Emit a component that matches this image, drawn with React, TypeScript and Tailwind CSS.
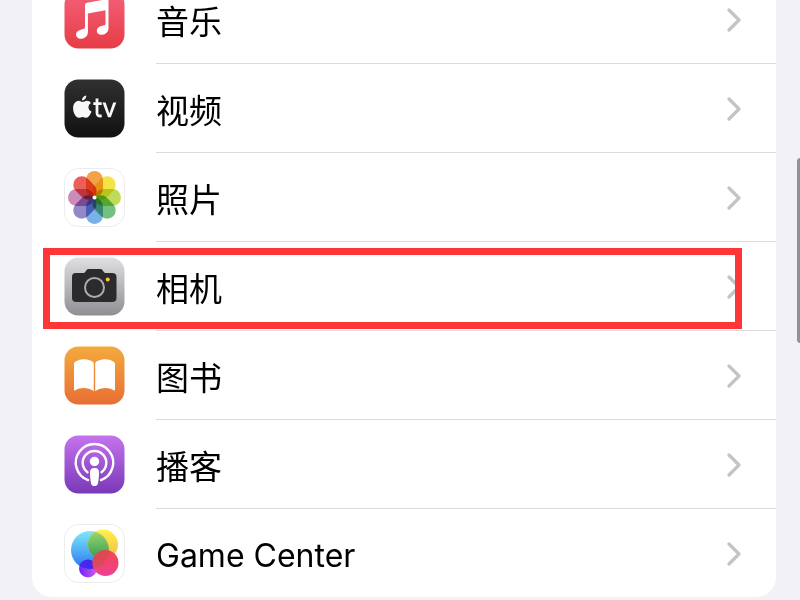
import type { ReactNode } from "react";

const TILE = "h-[59px] w-[61px] shrink-0";

function Tile({ fill, outlined, children }: { fill: string; outlined?: boolean; children: ReactNode }) {
  return (
    <svg viewBox="0 0 61 59" className={TILE} aria-hidden="true">
      <rect
        x="0.5"
        y="0.5"
        width="60"
        height="58"
        rx="14"
        fill={fill}
        stroke={outlined ? "#ececee" : "none"}
      />
      {children}
    </svg>
  );
}

function Gradient({ id, from, to }: { id: string; from: string; to: string }) {
  return (
    <linearGradient id={id} x1="0" y1="0" x2="0" y2="1">
      <stop offset="0" stopColor={from} />
      <stop offset="1" stopColor={to} />
    </linearGradient>
  );
}

function MusicIcon() {
  return (
    <Tile fill="url(#music)">
      <defs><Gradient id="music" from="#f4627a" to="#e63c46" /></defs>
      <path
        d="M21 15.500c0-1.600.7-2.400 2.200-2.700l19-3.600c1.700-.3 2.300.3 2.300 1.800V38c0 3.800-2.600 6.300-6.300 6.700-3 .3-5.400-1.300-5.400-4 0-2.500 1.800-4.100 4.600-4.800l2.600-.6c1-.3 1.500-.8 1.500-1.900V20.300L23.900 23.600V42c0 3.800-2.500 6.200-6.200 6.700-3.300.4-5.700-1.300-5.700-4.200 0-2.500 1.900-4.200 4.700-4.800l2.500-.6c1.300-.3 1.800-.9 1.800-2.100z"
        fill="#fff"
      />
    </Tile>
  );
}

function TvIcon() {
  return (
    <Tile fill="url(#tv)">
      <defs><Gradient id="tv" from="#303030" to="#111111" /></defs>
      <path
        d="M18 23c2 0 3.300-1.300 4.800-1.300 1.800 0 3.200.8 4.100 2.200-3.600 2.300-3 7 .6 8.600-1.100 3.100-3 6.200-5.200 6.200-1.300 0-2-.8-3.700-.8-1.600 0-2.500.8-3.700.8-3 0-5.800-5-5.800-9.500 0-4.600 2.800-7.400 5.800-7.400 1.400 0 2.300 1.200 3.100 1.200z"
        fill="#f7f7f7"
      />
      <path d="M18 21.500c-.2-2.500 1.900-4.700 4.200-5 .3 2.600-1.800 4.900-4.200 5z" fill="#f7f7f7" />
      <path d="M33 19.500V34c0 2.700 1.300 3.300 4.700 2.900M29.300 24.700h8.400" fill="none" stroke="#f7f7f7" strokeWidth="2.800" />
      <path d="m38.500 23.400 5.500 14.900h2.800l5.500-14.900h-3.100l-3.800 11.200-3.800-11.200z" fill="#f7f7f7" />
    </Tile>
  );
}

const PETALS = ["#f2a24a", "#f4e448", "#bfdb5c", "#74c07e", "#78b2e6", "#9588c6", "#cb8cbb", "#ea5f5a"];

function PhotosIcon() {
  return (
    <Tile fill="#fff" outlined>
      <g style={{ isolation: "isolate" }}>
        {PETALS.map((color, i) => (
          <rect
            key={color}
            x="22"
            y="3"
            width="17"
            height="26"
            rx="8.500"
            fill={color}
            transform={`rotate(${i * 45} 30.500 29.500)`}
            className="mix-blend-multiply"
          />
        ))}
      </g>
      <circle cx="30.500" cy="29.500" r="2" fill="#fff" />
    </Tile>
  );
}

function CameraIcon() {
  return (
    <Tile fill="url(#camera)">
      <defs><Gradient id="camera" from="#dfdee2" to="#8f8e93" /></defs>
      <path
        d="M12 16h7c1.500 0 2-.6 2.700-1.800.9-1.600 1.700-2.200 3.500-2.200h10.600c1.800 0 2.600.6 3.500 2.200.7 1.200 1.200 1.800 2.700 1.800h6c3.200 0 4.500 1.300 4.500 4.300v20.400c0 3-1.300 4.300-4.500 4.300H12.500c-3.200 0-4.500-1.300-4.500-4.300V20.300c0-3 1-4.300 4-4.300z"
        fill="#2b2b2d"
      />
      <circle cx="30.500" cy="30.500" r="9.500" fill="none" stroke="#aaaaaf" strokeWidth="2" />
      <circle cx="43.700" cy="22.500" r="2" fill="#f7ca45" />
    </Tile>
  );
}

function BooksIcon() {
  return (
    <Tile fill="url(#books)">
      <defs><Gradient id="books" from="#f3aa3d" to="#e96e34" /></defs>
      <path d="M10 18c0-1 .4-1.700 1.300-2.300 4.700-3.200 11-3.200 16.200-.7 1.500.8 2.300 1.600 2.300 3v27.200c-5.500-4-13.400-4.200-18.400-1-.9.500-1.400.3-1.400-.7z" fill="#fff" />
      <path d="M51 18c0-1-.4-1.700-1.300-2.300-4.700-3.200-11-3.200-16.200-.7-1.500.8-2.300 1.600-2.300 3v27.200c5.500-4 13.400-4.200 18.400-1 .9.500 1.400.3 1.400-.7z" fill="#fff" />
    </Tile>
  );
}

function PodcastsIcon() {
  return (
    <Tile fill="url(#podcasts)">
      <defs><Gradient id="podcasts" from="#c573ee" to="#7a38b6" /></defs>
      <g fill="none" stroke="#fff" strokeWidth="2.400" strokeLinecap="round">
        <path d="M24 45.200a18.700 18.700 0 1 1 13 0" />
        <path d="M23.500 37.300a11.800 11.800 0 1 1 14 0" />
      </g>
      <circle cx="30.500" cy="26.500" r="4.700" fill="#fff" />
      <path d="M26 37.500c0-3.200 1.500-4.500 4.500-4.500s4.500 1.300 4.500 4.500c0 3.600-.4 7.800-1 10.700-.4 1.900-1.500 2.800-3.500 2.800s-3.100-.9-3.500-2.800c-.6-2.900-1-7.100-1-10.700z" fill="#fff" />
    </Tile>
  );
}

function GameCenterIcon() {
  return (
    <Tile fill="#fff" outlined>
      <defs>
        <Gradient id="bubbleBlue" from="#7ee9f8" to="#2a74f2" />
        <Gradient id="bubbleYellow" from="#fff24a" to="#f3b64b" />
        <Gradient id="bubbleGreen" from="#a6d96c" to="#2c9c55" />
        <Gradient id="bubblePink" from="#f1484c" to="#ef4095" />
        <linearGradient id="bubblePurple">
          <stop offset="0" stopColor="#6a22fb" />
          <stop offset="1" stopColor="#d55be6" />
        </linearGradient>
        <clipPath id="blueDisc"><circle cx="26" cy="26" r="19" /></clipPath>
        <clipPath id="pinkDisc"><circle cx="41.500" cy="39" r="13" /></clipPath>
      </defs>
      <circle cx="26" cy="26" r="19" fill="url(#bubbleBlue)" />
      <circle cx="39" cy="20.500" r="15" fill="url(#bubbleYellow)" />
      <circle cx="39" cy="20.500" r="15" fill="url(#bubbleGreen)" clipPath="url(#blueDisc)" />
      <circle cx="24" cy="44.500" r="9" fill="url(#bubblePurple)" />
      <circle cx="24" cy="44.500" r="9" fill="#4328ed" clipPath="url(#blueDisc)" />
      <circle cx="41.500" cy="39" r="13" fill="url(#bubblePink)" />
      <circle cx="26" cy="26" r="19" fill="#d64a50" opacity="0.700" clipPath="url(#pinkDisc)" />
    </Tile>
  );
}

function Chevron() {
  return (
    <svg viewBox="0 0 14 24" className="ml-auto h-6 w-3.5 shrink-0" aria-hidden="true">
      <path d="m2 2 10 10L2 22" fill="none" stroke="#c4c4c6" strokeWidth="3.200" strokeLinecap="round" strokeLinejoin="round" />
    </svg>
  );
}

const APPS = [
  { label: "音乐", icon: <MusicIcon /> },
  { label: "视频", icon: <TvIcon /> },
  { label: "照片", icon: <PhotosIcon /> },
  { label: "相机", icon: <CameraIcon />, highlighted: true },
  { label: "图书", icon: <BooksIcon /> },
  { label: "播客", icon: <PodcastsIcon /> },
  { label: "Game Center", icon: <GameCenterIcon />, latin: true },
];

export default function App() {
  return (
    <div className="relative h-screen overflow-hidden bg-[#f2f1f6] pr-6 pl-8 font-[Inter,'Noto_Sans_CJK_SC',sans-serif] text-black">
      <ul className="-mt-[25px] rounded-b-[20px] bg-white">
        {APPS.map(({ label, icon, highlighted, latin }) => (
          <li key={label} className="group relative">
            <a href="#" className="flex items-center gap-[31px] pl-8">
              {icon}
              <span className="flex h-[89px] flex-1 items-center border-b border-[#dcdcde] pt-px pr-[35px] group-last:h-[88px] group-last:border-b-0">
                <span className={latin ? "pt-1 text-[32px] leading-10" : "pt-1 text-[33px] leading-10"}>{label}</span>
                <Chevron />
              </span>
            </a>
            {highlighted && (
              <div className="pointer-events-none absolute top-1.5 right-[34px] bottom-0.5 left-[11px] border-7 border-[#fd3737]" />
            )}
          </li>
        ))}
      </ul>
      <div className="absolute top-[158px] -right-1 h-[185px] w-[7px] rounded-full bg-[#929196]" />
    </div>
  );
}
